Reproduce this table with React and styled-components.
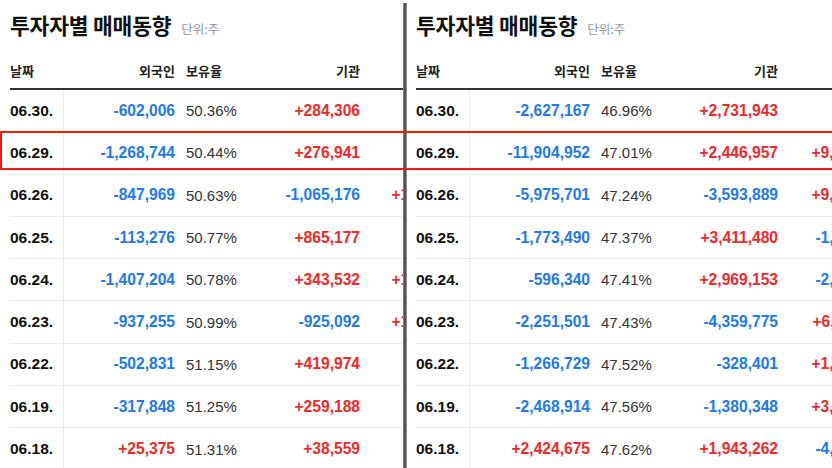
import styled, { createGlobalStyle } from 'styled-components';

const GlobalStyle = createGlobalStyle`
  *, *::before, *::after {
    box-sizing: border-box;
  }
  html, body {
    margin: 0;
    padding: 0;
    background: #ffffff;
  }
  body {
    font-family: "Liberation Sans", "Noto Sans CJK KR", sans-serif;
    color: #111;
  }
`;

const leftData = [
  ['06.30.', '-602,006', '50.36%', '+284,306', '+317,700'],
  ['06.29.', '-1,268,744', '50.44%', '+276,941', '+991,803'],
  ['06.26.', '-847,969', '50.63%', '-1,065,176', '+1,913,145'],
  ['06.25.', '-113,276', '50.77%', '+865,177', '-751,901'],
  ['06.24.', '-1,407,204', '50.78%', '+343,532', '+1,063,672'],
  ['06.23.', '-937,255', '50.99%', '-925,092', '+1,862,347'],
  ['06.22.', '-502,831', '51.15%', '+419,974', '+82,857'],
  ['06.19.', '-317,848', '51.25%', '+259,188', '+58,660'],
  ['06.18.', '+25,375', '51.31%', '+38,559', '-63,934'],
];

const rightData = [
  ['06.30.', '-2,627,167', '46.96%', '+2,731,943', '-97,436'],
  ['06.29.', '-11,904,952', '47.01%', '+2,446,957', '+9,457,995'],
  ['06.26.', '-5,975,701', '47.24%', '-3,593,889', '+9,569,590'],
  ['06.25.', '-1,773,490', '47.37%', '+3,411,480', '-1,637,990'],
  ['06.24.', '-596,340', '47.41%', '+2,969,153', '-2,372,813'],
  ['06.23.', '-2,251,501', '47.43%', '-4,359,775', '+6,611,276'],
  ['06.22.', '-1,266,729', '47.52%', '-328,401', '+1,595,130'],
  ['06.19.', '-2,468,914', '47.56%', '-1,380,348', '+3,849,262'],
  ['06.18.', '+2,424,675', '47.62%', '+1,943,262', '-4,367,937'],
];

// column widths per panel: date | 외국인 | 보유율 | 기관 | 개인
const leftCols = '54px 111px 80px 105px 110px';
const rightCols = '54px 120px 86px 102px 112px';

const InvestorTable = ({ rows, cols }) => (
  <>
    <TitleBar>
      <Title>투자자별 매매동향</Title>
      <Unit>단위:주</Unit>
    </TitleBar>
    <HeadRow $cols={cols}>
      <HeadCell>날짜</HeadCell>
      <HeadCell $align="right">외국인</HeadCell>
      <HeadCell $pad>보유율</HeadCell>
      <HeadCell $align="right">기관</HeadCell>
      <HeadCell $align="right">개인</HeadCell>
    </HeadRow>
    {rows.map((r) => (
      <Row key={r[0]} $cols={cols}>
        <DateCell>{r[0]}</DateCell>
        <Num $up={r[1][0] === '+'}>{r[1]}</Num>
        <Ratio>{r[2]}</Ratio>
        <Num $up={r[3][0] === '+'}>{r[3]}</Num>
        <Num $up={r[4][0] === '+'}>{r[4]}</Num>
      </Row>
    ))}
  </>
);

const App = () => (
  <>
    <GlobalStyle />
    <Screen>
      <Panel $width="403px" $pad="10px">
        <InvestorTable rows={leftData} cols={leftCols} />
      </Panel>
      <Divider />
      <Panel $pad="9px">
        <InvestorTable rows={rightData} cols={rightCols} />
      </Panel>
      <Highlight />
    </Screen>
  </>
);

export default App;

const Screen = styled.div`
  position: relative;
  display: flex;
  width: 832px;
  height: 468px;
  overflow: hidden;
  background: #fff;
`;

const Panel = styled.div`
  flex: ${(p) => (p.$width ? `0 0 ${p.$width}` : '1 1 auto')};
  min-width: 0;
  overflow: hidden;
  padding-left: ${(p) => p.$pad};
  display: flex;
  flex-direction: column;
`;

const Divider = styled.div`
  flex: 0 0 4px;
  margin-top: 3px;
  background: linear-gradient(90deg, #9a9a9a 0%, #4a4a4a 40%, #5a5a5a 70%, #b5b5b5 100%);
`;

const Highlight = styled.div`
  position: absolute;
  top: 131px;
  left: 0;
  right: -10px;
  height: 39px;
  border: 2px solid #ee1c0e;
  pointer-events: none;
`;

const TitleBar = styled.div`
  display: flex;
  align-items: baseline;
  flex: 0 0 50px;
  padding-top: 10px;
  white-space: nowrap;
`;

const Title = styled.h2`
  margin: 0;
  font-family: "Noto Sans CJK KR", sans-serif;
  font-size: 21.5px;
  line-height: 30px;
  font-weight: 700;
  color: #111;
  letter-spacing: -0.2px;
`;

const Unit = styled.span`
  margin-left: 10px;
  font-family: "Noto Sans CJK KR", sans-serif;
  font-size: 12.5px;
  color: #8d98a6;
`;

const HeadRow = styled.div`
  display: grid;
  grid-template-columns: ${(p) => p.$cols};
  align-items: center;
  flex: 0 0 40px;
  padding-top: 3px;
  border-bottom: 2px solid #333;
  width: 1000px;
`;

const HeadCell = styled.div`
  font-family: "Noto Sans CJK KR", sans-serif;
  font-size: 13px;
  font-weight: 700;
  color: #222;
  text-align: ${(p) => p.$align || 'left'};
  padding-left: ${(p) => (p.$pad ? '11px' : '0')};
  white-space: nowrap;
`;

const Row = styled.div`
  display: grid;
  grid-template-columns: ${(p) => p.$cols};
  align-items: stretch;
  flex: 0 0 42.3px;
  border-bottom: 1px solid #ebebeb;
  width: 1000px;
`;

const DateCell = styled.div`
  display: flex;
  align-items: center;
  border-right: 1px solid #ececec;
  font-size: 15.5px;
  font-weight: 700;
  color: #111;
`;

const Num = styled.div`
  display: flex;
  align-items: center;
  justify-content: flex-end;
  font-size: 15.6px;
  font-weight: 700;
  color: ${(p) => (p.$up ? '#ec2a2a' : '#1d7ae6')};
  white-space: nowrap;
`;

const Ratio = styled.div`
  display: flex;
  align-items: center;
  padding-left: 11px;
  font-size: 15px;
  color: #333;
`;
